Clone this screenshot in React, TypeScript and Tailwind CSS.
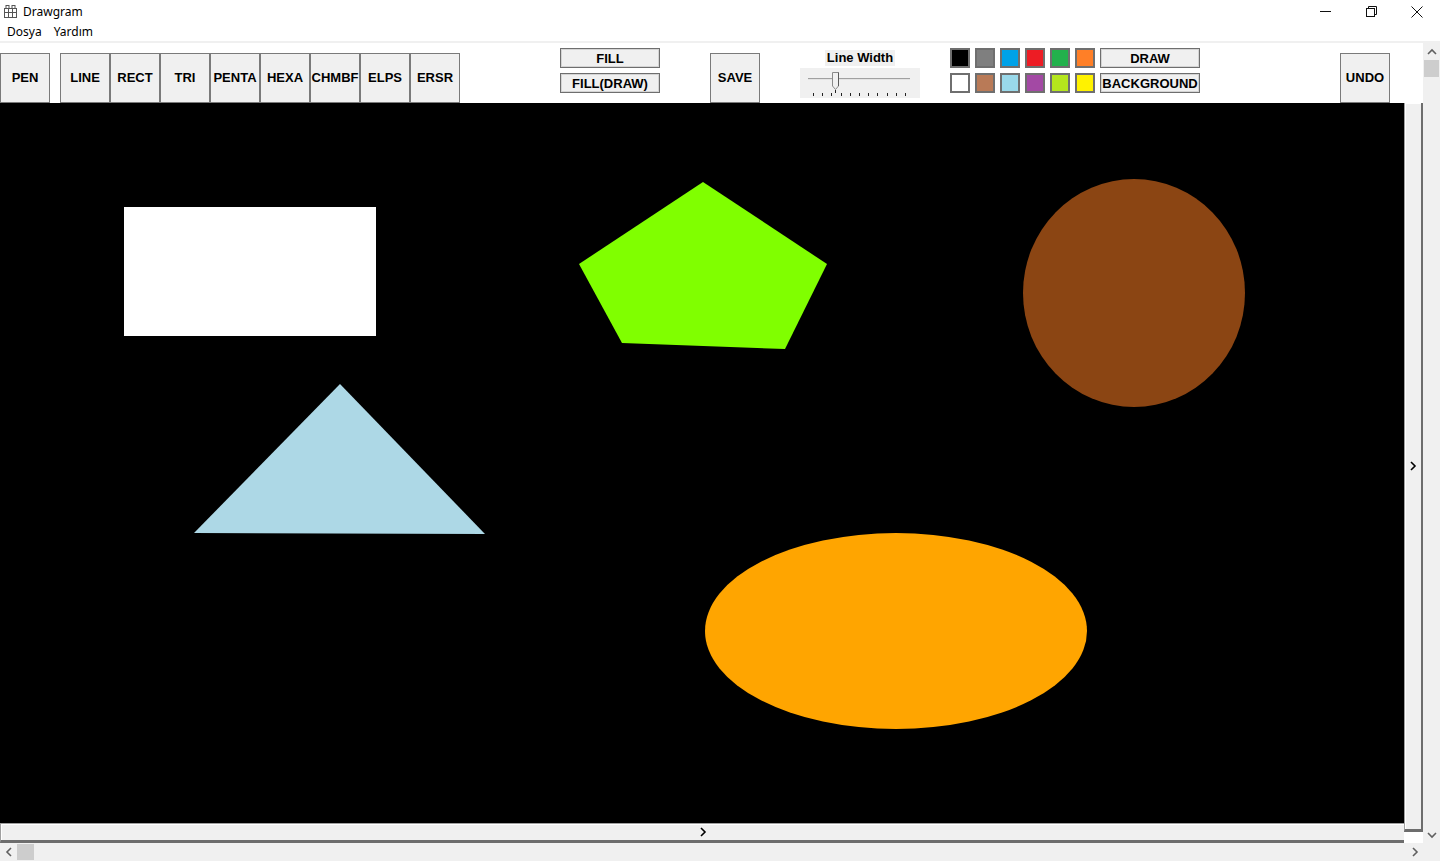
import React from "react"

const FONT = { fontFamily: '"Liberation Sans", Arial, sans-serif' }
const UI_FONT = { fontFamily: '"Noto Sans", "Open Sans", sans-serif' }

const TOOLS = ["LINE", "RECT", "TRI", "PENTA", "HEXA", "CHMBF", "ELPS", "ERSR"]

const SWATCHES = [
  ["#000000", "#7f7f7f", "#00a2e8", "#ed1c24", "#22b14c", "#ff7f27"],
  ["#ffffff", "#b97a57", "#99d9ea", "#a349a4", "#b5e61d", "#fff200"],
]

function BigButton({ label }: { label: string }) {
  return (
    <button
      className="w-[50px] h-[50px] shrink-0 bg-[#f0f0f0] border border-[#7a7a7a] text-[13px] font-bold text-black flex items-center justify-center overflow-hidden whitespace-nowrap"
      style={FONT}
    >
      {label}
    </button>
  )
}

function SmallButton({ label }: { label: string }) {
  return (
    <button
      className="w-[100px] h-[20px] bg-[#f0f0f0] border border-[#6e6e6e] shadow-[inset_0_0_0_1px_#d4d4d4] text-[13px] font-bold text-black flex items-center justify-center whitespace-nowrap leading-none"
      style={FONT}
    >
      {label}
    </button>
  )
}

function Chevron({
  dir,
  color = "#606060",
}: {
  dir: "up" | "down" | "left" | "right"
  color?: string
}) {
  const pts = {
    up: "1,6 5,2 9,6",
    down: "1,2 5,6 9,2",
    left: "6,1 2,5 6,9",
    right: "2,1 6,5 2,9",
  }[dir]
  const size = dir === "up" || dir === "down" ? { w: 10, h: 8 } : { w: 8, h: 10 }
  return (
    <svg width={size.w} height={size.h} viewBox={`0 0 ${size.w} ${size.h}`}>
      <polyline points={pts} fill="none" stroke={color} strokeWidth="1.6" />
    </svg>
  )
}

function Trackbar() {
  const ticks = Array.from({ length: 11 }, (_, i) => 13 + i * 9.2)
  return (
    <svg width="120" height="30" viewBox="0 0 120 30" className="bg-[#f0f0f0]">
      <line x1="8" y1="10.5" x2="110" y2="10.5" stroke="#a0a0a0" strokeWidth="1" />
      <line x1="8" y1="11.5" x2="110" y2="11.5" stroke="#e3e3e3" strokeWidth="1" />
      <path d="M32.5 4.5 H38.5 V18 L35.5 21.5 L32.5 18 Z" fill="#f0f0f0" stroke="#8a8a8a" strokeWidth="1" />
      <line x1="38.5" y1="4.5" x2="38.5" y2="18" stroke="#5a5a5a" strokeWidth="1" />
      {ticks.map((x) => (
        <line key={x} x1={Math.round(x) + 0.5} y1="25" x2={Math.round(x) + 0.5} y2="28" stroke="#222" strokeWidth="1" />
      ))}
      <line x1="35.5" y1="22" x2="35.5" y2="25" stroke="#222" strokeWidth="1" />
    </svg>
  )
}

export default function App() {
  return (
    <div className="w-[1440px] h-[861px] bg-white overflow-hidden flex flex-col text-black" style={UI_FONT}>
      {/* title bar */}
      <div className="h-[22px] pt-[1px] flex items-center shrink-0">
        <svg width="13" height="13" viewBox="0 0 13 13" className="ml-[4px]">
          <rect x="0.5" y="3.5" width="12" height="9" fill="none" stroke="#555" />
          <line x1="0.5" y1="7.5" x2="12.5" y2="7.5" stroke="#555" />
          <line x1="4.5" y1="3.5" x2="4.5" y2="12.5" stroke="#555" />
          <line x1="8.5" y1="3.5" x2="8.5" y2="12.5" stroke="#555" />
          <rect x="2" y="0.5" width="3" height="3" fill="none" stroke="#555" />
          <rect x="8" y="0.5" width="3" height="3" fill="none" stroke="#555" />
        </svg>
        <span className="ml-[6px] text-[12px]">Drawgram</span>
        <div className="ml-auto flex items-center">
          <div className="w-[46px] h-[21px] flex items-center justify-center">
            <svg width="11" height="11" viewBox="0 0 11 11">
              <line x1="0" y1="5.5" x2="11" y2="5.5" stroke="#111" />
            </svg>
          </div>
          <div className="w-[46px] h-[21px] flex items-center justify-center">
            <svg width="11" height="11" viewBox="0 0 11 11">
              <rect x="0.5" y="2.5" width="8" height="8" fill="none" stroke="#111" />
              <path d="M2.5 2.5 V0.5 H10.5 V8.5 H8.5" fill="none" stroke="#111" />
            </svg>
          </div>
          <div className="w-[46px] h-[21px] flex items-center justify-center">
            <svg width="12" height="12" viewBox="0 0 12 12">
              <path d="M0.5 0.5 L11.5 11.5 M11.5 0.5 L0.5 11.5" stroke="#111" strokeWidth="1" />
            </svg>
          </div>
        </div>
      </div>
      {/* menu bar */}
      <div className="h-[21px] pt-[1px] shrink-0 flex items-center gap-[12px] pl-[7px] text-[12px] border-b-2 border-[#f0f0f0]">
        <span>Dosya</span>
        <span>Yardım</span>
      </div>

      <div className="flex flex-1 min-h-0">
        <div className="w-[1423px] flex flex-col">
          {/* toolbar */}
          <div className="h-[60px] shrink-0 flex items-start">
            <div className="mt-[10px]">
              <BigButton label="PEN" />
            </div>
            <div className="mt-[10px] ml-[10px] flex">
              {TOOLS.map((t) => (
                <BigButton key={t} label={t} />
              ))}
            </div>
            <div className="ml-[100px] mt-[5px] flex flex-col gap-[5px]">
              <SmallButton label="FILL" />
              <SmallButton label="FILL(DRAW)" />
            </div>
            <div className="mt-[10px] ml-[50px]">
              <BigButton label="SAVE" />
            </div>
            <div className="ml-[40px] mt-[4px] w-[120px] flex flex-col items-center">
              <div className="h-[21px] flex items-center">
                <span className="bg-[#f0f0f0] px-[2px] text-[13px] font-bold leading-[16px]" style={FONT}>
                  Line Width
                </span>
              </div>
              <Trackbar />
            </div>
            <div className="ml-[30px] mt-[5px] flex flex-col gap-[5px]">
              {SWATCHES.map((row, ri) => (
                <div key={ri} className="flex items-center">
                  {row.map((c) => (
                    <div
                      key={c}
                      className="w-[20px] h-[20px] mr-[5px] border-2 border-[#6f6f6f]"
                      style={{ backgroundColor: c }}
                    />
                  ))}
                  <SmallButton label={ri === 0 ? "DRAW" : "BACKGROUND"} />
                </div>
              ))}
            </div>
            <div className="mt-[10px] ml-[140px]">
              <BigButton label="UNDO" />
            </div>
          </div>

          {/* canvas area */}
          <div className="flex flex-1 min-h-0">
            <div className="w-[1404px] flex flex-col">
              <div className="h-[720px] bg-black">
                <svg width="1404" height="720" viewBox="0 0 1404 720">
                  <rect x="124" y="104" width="252" height="129" fill="#ffffff" />
                  <polygon points="703,79 827,161 785,246 622,240 579,161" fill="#80ff00" />
                  <ellipse cx="1134" cy="190" rx="111" ry="114" fill="#8b4513" />
                  <polygon points="340,281 485,431 194,430" fill="#add8e6" />
                  <ellipse cx="896" cy="528" rx="191" ry="98" fill="#ffa500" />
                </svg>
              </div>
              <div className="h-[20px] bg-[#f0f0f0] border-t border-l border-[#a0a0a0] border-b-[3px] border-b-[#6d6d6d] shadow-[inset_1px_1px_0_#ffffff] flex items-center justify-center">
                <Chevron dir="right" color="#000" />
              </div>
            </div>
            <div className="w-[19px] flex flex-col">
              <div className="h-[729px] bg-[#f0f0f0] border-l border-[#a0a0a0] border-r-2 border-r-[#6d6d6d] border-b-[3px] border-b-[#6d6d6d] shadow-[inset_1px_1px_0_#ffffff] flex items-center justify-center">
                <Chevron dir="right" color="#000" />
              </div>
              <div className="flex-1 bg-white" />
            </div>
          </div>
        </div>

        {/* vertical scrollbar */}
        <div className="w-[17px] bg-[#f0f0f0] flex flex-col items-center">
          <div className="h-[17px] flex items-center justify-center">
            <Chevron dir="up" />
          </div>
          <div className="w-[15px] h-[17px] bg-[#cdcdcd]" />
          <div className="flex-1" />
          <div className="h-[17px] flex items-center justify-center">
            <Chevron dir="down" />
          </div>
        </div>
      </div>

      {/* horizontal scrollbar */}
      <div className="h-[18px] shrink-0 bg-[#f0f0f0] flex items-center">
        <div className="w-[17px] flex items-center justify-center">
          <Chevron dir="left" />
        </div>
        <div className="w-[17px] h-[16px] bg-[#cdcdcd]" />
        <div className="flex-1" />
        <div className="w-[17px] mr-[17px] flex items-center justify-center">
          <Chevron dir="right" />
        </div>
      </div>
    </div>
  )
}
